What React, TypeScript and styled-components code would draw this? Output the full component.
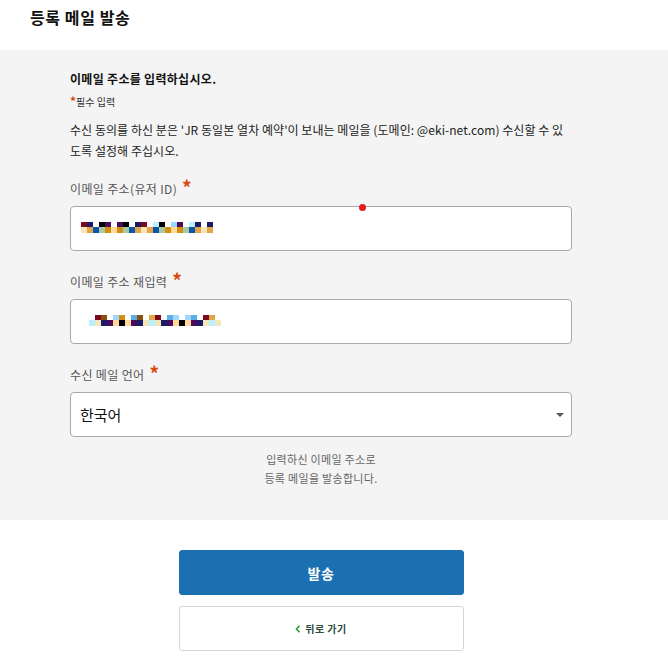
import styled, { createGlobalStyle } from "styled-components";

const GlobalStyle = createGlobalStyle`
  html, body {
    margin: 0;
    padding: 0;
    background: #ffffff;
    font-family: "Noto Sans CJK KR", "Noto Sans", sans-serif;
    color: #222;
  }
`;

const Header = styled.header`
  height: 50px;
  padding: 0 30px;
  display: flex;
  align-items: flex-start;
`;

const Title = styled.h1`
  margin: 5px 0 0;
  font-size: 16px;
  font-weight: 700;
  color: #111;
  letter-spacing: 0.6px;
`;

const Panel = styled.section`
  background: #f4f4f4;
  padding: 19px 96px 32px 70px;
`;

const Lead = styled.p`
  margin: 0;
  font-size: 12px;
  font-weight: 700;
  line-height: 20px;
  color: #111;
  letter-spacing: 0.3px;
`;

const Required = styled.p`
  margin: 5px 0 0;
  font-size: 10px;
  line-height: 16px;
  color: #333;
`;

const Star = styled.span<{ $big?: boolean }>`
  color: #d9480f;
  font-weight: 700;
  font-size: ${(p) => (p.$big ? "19px" : "12px")};
  margin-left: ${(p) => (p.$big ? "5px" : "0")};
  vertical-align: ${(p) => (p.$big ? "-1px" : "0")};
  line-height: 0;
`;

const Notice = styled.p`
  margin: 9px 0 0;
  font-size: 12px;
  line-height: 21px;
  color: #222;
  letter-spacing: 0.05px;
  word-break: break-all;
`;

const Field = styled.div`
  margin-top: 21px;
  &:first-of-type {
    margin-top: 18px;
  }
`;

const Label = styled.div`
  font-size: 12px;
  color: #555;
  height: 20px;
  line-height: 20px;
  letter-spacing: 0.35px;
  margin-bottom: 7px;
`;

const Box = styled.div`
  position: relative;
  height: 45px;
  box-sizing: border-box;
  background: #fff;
  border: 1px solid #a9a9a9;
  border-radius: 4px;
  display: flex;
  align-items: center;
  padding: 0 7px 0 9px;
`;

const SelectText = styled.span`
  flex: 1;
  font-size: 15px;
  color: #111;
`;

const Caret = styled.span`
  width: 0;
  height: 0;
  border-left: 4px solid transparent;
  border-right: 4px solid transparent;
  border-top: 4px solid #555;
`;

const Dot = styled.span`
  position: absolute;
  top: -3px;
  left: 288px;
  width: 7px;
  height: 7px;
  border-radius: 50%;
  background: #e21c1c;
`;

const Help = styled.p`
  margin: 13px 0 0;
  text-align: center;
  font-size: 11px;
  line-height: 19px;
  color: #666;
  letter-spacing: 0.3px;
`;

const Actions = styled.div`
  display: flex;
  flex-direction: column;
  align-items: center;
  gap: 11px;
  padding: 30px 96px 0 70px;
`;

const Button = styled.button<{ $primary?: boolean }>`
  width: 285px;
  height: 45px;
  box-sizing: border-box;
  border-radius: 3px;
  font-family: inherit;
  cursor: pointer;
  display: flex;
  align-items: center;
  justify-content: center;
  gap: 4px;
  background: ${(p) => (p.$primary ? "#1b70b2" : "#fff")};
  border: 1px solid ${(p) => (p.$primary ? "#1b70b2" : "#d6d6d6")};
  color: ${(p) => (p.$primary ? "#fff" : "#2c4a3a")};
  font-size: ${(p) => (p.$primary ? "14px" : "10px")};
  font-weight: 700;
  letter-spacing: 0.5px;
`;

const palette = [
  "#000", "#f5e6b8", "#d4900c", "#7a0a1c", "#4a0a5e", "#0c58a8", "#5ab0e6",
  "#b8f0ff", "#ffd89a", "#e3a44a", "#9fd6ff", "#1a1a66", "#a8c8a8", "#8a5010",
];

const pick = (seed: number, n: number) =>
  Array.from({ length: n }, (_, i) => palette[(i * 7 + seed * 3 + ((i * i) % 5)) % palette.length]);

const Mosaic = ({ seed, offset }: { seed: number; offset: number }) => {
  const top = pick(seed, 22);
  const bottom = pick(seed + 4, 22);
  return (
    <svg width="140" height="18" viewBox="0 0 140 18" style={{ marginLeft: offset }}>
      {top.map((c, i) =>
        (i + seed) % 3 === 0 ? null : <rect key={`t${i}`} x={i * 6} y={2} width={6} height={5} fill={c} />
      )}
      {bottom.map((c, i) => (
        <rect key={`b${i}`} x={i * 6} y={7} width={6} height={6} fill={c} />
      ))}
    </svg>
  );
};

export default function App() {
  return (
    <>
      <GlobalStyle />
      <Header>
        <Title>등록 메일 발송</Title>
      </Header>
      <Panel>
        <Lead>이메일 주소를 입력하십시오.</Lead>
        <Required>
          <Star>*</Star>필수 입력
        </Required>
        <Notice>
          수신 동의를 하신 분은 'JR 동일본 열차 예약'이 보내는 메일을 (도메인: @eki-net.com) 수신할 수 있도록 설정해 주십시오.
        </Notice>

        <Field>
          <Label>
            이메일 주소(유저 ID)<Star $big>*</Star>
          </Label>
          <Box>
            <Dot />
            <Mosaic seed={1} offset={1} />
          </Box>
        </Field>

        <Field>
          <Label>
            이메일 주소 재입력<Star $big>*</Star>
          </Label>
          <Box>
            <Mosaic seed={3} offset={9} />
          </Box>
        </Field>

        <Field>
          <Label>
            수신 메일 언어<Star $big>*</Star>
          </Label>
          <Box>
            <SelectText>한국어</SelectText>
            <Caret />
          </Box>
        </Field>

        <Help>
          입력하신 이메일 주소로
          <br />
          등록 메일을 발송합니다.
        </Help>
      </Panel>
      <Actions>
        <Button $primary>발송</Button>
        <Button>
          <svg width="6" height="8" viewBox="0 0 6 8">
            <path d="M4.5 0.8 L1.5 4 L4.5 7.2" fill="none" stroke="#2a9d3a" strokeWidth="1.6" />
          </svg>
          뒤로 가기
        </Button>
      </Actions>
    </>
  );
}
